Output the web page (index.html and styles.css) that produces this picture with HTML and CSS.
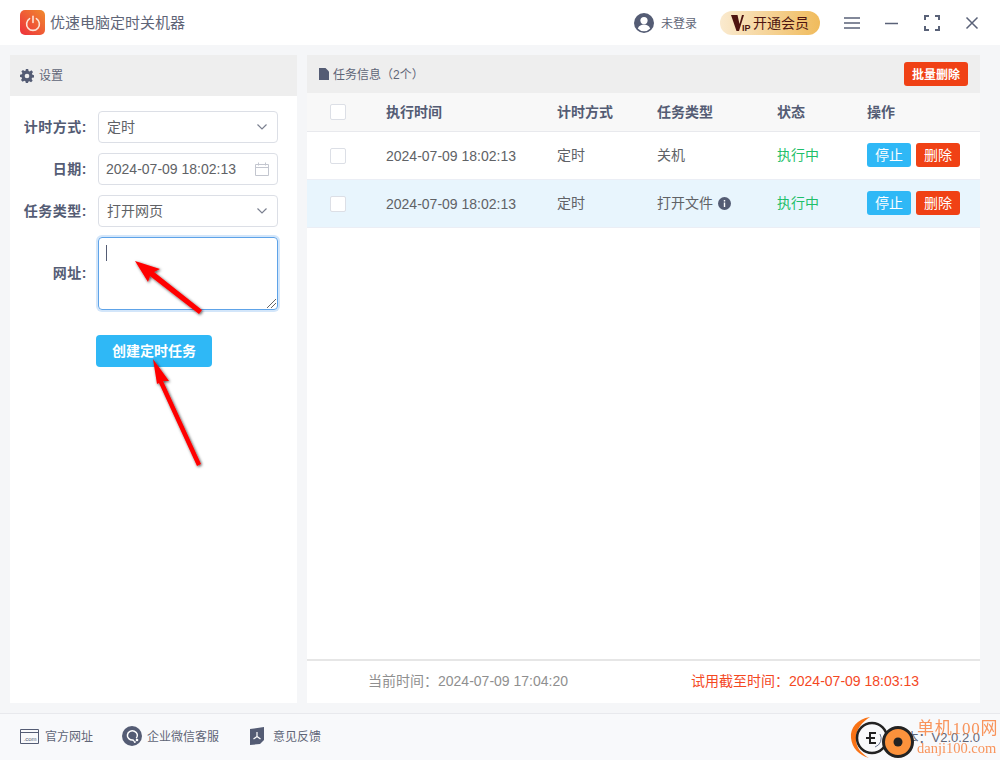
FILE: index.html
```html
<!DOCTYPE html>
<html lang="zh-CN">
<head>
    <meta charset="UTF-8">
    <title>优速电脑定时关机器</title>
    <link rel="stylesheet" href="styles.css">
</head>
<body>
<div class="app">
    <!-- 标题栏 -->
    <header class="titlebar">
        <div class="logo">
            <svg width="18" height="18" viewBox="0 0 18 18" fill="none" stroke="#fde3d6" stroke-width="1.6" stroke-linecap="round"><path d="M5.6 4.6a6.4 6.4 0 1 0 6.8 0"/><path d="M9 2.4v6"/></svg>
        </div>
        <span class="app-name">优速电脑定时关机器</span>
        <div class="user">
            <svg width="20" height="20" viewBox="0 0 20 20"><circle cx="10" cy="10" r="10" fill="#545c74"/><circle cx="10" cy="7.6" r="3.6" fill="#fff"/><path d="M3.8 15.4c1.2-3 3.6-4 6.2-4s5 1 6.2 4a8.4 8.4 0 0 1-12.4 0z" fill="#fff"/></svg>
            <span>未登录</span>
        </div>
        <div class="vip">
            <svg width="22" height="18" viewBox="0 0 22 18"><path d="M0 1h6.500l2 9 2.500-9h2L8 17H5.500z" fill="#4e1410"/><text x="11" y="17" font-size="9" font-weight="700" fill="#4e1410" font-family="Liberation Sans, sans-serif">IP</text></svg>
            <span>开通会员</span>
        </div>
        <div class="win-btns">
            <svg width="16" height="12" viewBox="0 0 16 12" stroke="#5a6278" stroke-width="1.5"><path d="M0 1h16M0 6h16M0 11h16"/></svg>
            <svg width="14" height="12" viewBox="0 0 14 12" stroke="#5a6278" stroke-width="1.5"><path d="M0 6.500h13"/></svg>
            <svg width="16" height="16" viewBox="0 0 16 16" fill="none" stroke="#5a6278" stroke-width="2"><path d="M1 5V1h4M11 1h4v4M15 11v4h-4M5 15H1v-4"/></svg>
            <svg width="14" height="14" viewBox="0 0 14 14" stroke="#5a6278" stroke-width="1.5"><path d="M1.500 1.500l11 11M12.500 1.500l-11 11"/></svg>
        </div>
    </header>

    <main class="content">
        <!-- 左侧设置 -->
        <section class="settings">
            <div class="settings-head">
                <svg width="14" height="14" viewBox="0 0 24 24"><path fill="#545c74" fill-rule="evenodd" d="M10 0h4l.7 3.300 2 .8L19.500 2.300l2.800 2.800-1.800 2.800.8 2L24 10.700v3.800l-3.300.7-.8 2 1.800 2.800-2.800 2.800-2.800-1.800-2 .8L13.800 24H10l-.7-3.200-2-.8-2.800 1.800-2.800-2.800 1.800-2.800-.8-2L0 13.500v-3.800l3.300-.7.8-2-1.800-2.800L5 1.500l2.800 1.800 2-.8zM12 8a4 4 0 1 0 0 8 4 4 0 0 0 0-8z"/></svg>
                <span class="lift">设置</span>
            </div>
            <div class="form">
                <label>计时方式:</label>
                <div class="field"><span class="val lift">定时</span><svg class="chev" width="10" height="6" viewBox="0 0 10 6" fill="none" stroke="#7b8090" stroke-width="1.200"><path d="M.5.500 5 5 9.500.5"/></svg></div>
                <label>日期:</label>
                <div class="field field-date"><span class="val">2024-07-09 18:02:13</span><svg width="14" height="14" viewBox="0 0 14 14" fill="none" stroke="#c3c6cf"><path d="M.5 2.500h13v11H.5zM.5 5.500h13M3.500.5v3M10.500.5v3"/></svg></div>
                <label>任务类型:</label>
                <div class="field"><span class="val lift">打开网页</span><svg class="chev" width="10" height="6" viewBox="0 0 10 6" fill="none" stroke="#7b8090" stroke-width="1.200"><path d="M.5.500 5 5 9.500.5"/></svg></div>
                <label class="label-area">网址:</label>
                <div class="area">
                    <i class="caret"></i>
                    <svg class="grip" width="9" height="9" viewBox="0 0 9 9" stroke="#666"><path d="M0 9l9-9M4 9l5-5"/></svg>
                </div>
            </div>
            <button class="btn-create">创建定时任务</button>
        </section>

        <!-- 右侧任务列表 -->
        <section class="tasks">
            <div class="tasks-head">
                <div class="tasks-title">
                    <svg width="10" height="12" viewBox="0 0 10 12"><path fill="#545c74" d="M0 0h6.500L10 3.500V12H0z"/></svg>
                    <span class="lift">任务信息（2个）</span>
                </div>
                <button class="btn-batch">批量删除</button>
            </div>
            <div class="row row-head">
                <div class="col-check"><i class="check"></i></div>
                <div class="col-time lift">执行时间</div>
                <div class="col-mode lift">计时方式</div>
                <div class="col-type lift">任务类型</div>
                <div class="col-state lift">状态</div>
                <div class="col-ops lift">操作</div>
            </div>
            <div class="row">
                <div class="col-check"><i class="check"></i></div>
                <div class="col-time">2024-07-09 18:02:13</div>
                <div class="col-mode lift2">定时</div>
                <div class="col-type lift2">关机</div>
                <div class="col-state running lift2">执行中</div>
                <div class="col-ops col-btns"><button class="btn-stop">停止</button><button class="btn-del">删除</button></div>
            </div>
            <div class="row row-active">
                <div class="col-check"><i class="check"></i></div>
                <div class="col-time">2024-07-09 18:02:13</div>
                <div class="col-mode lift2">定时</div>
                <div class="col-type"><span class="lift2">打开文件</span>
                    <svg class="info" width="13" height="13" viewBox="0 0 13 13"><circle cx="6.500" cy="6.500" r="6.500" fill="#545c74"/><path d="M5.800 5.500h1.400v4.500H5.800zM5.800 3h1.400v1.400H5.800z" fill="#fff"/></svg>
                </div>
                <div class="col-state running lift2">执行中</div>
                <div class="col-ops col-btns"><button class="btn-stop">停止</button><button class="btn-del">删除</button></div>
            </div>
            <div class="tasks-foot">
                <span class="now lift">当前时间：2024-07-09 17:04:20</span>
                <span class="trial lift">试用截至时间：2024-07-09 18:03:13</span>
            </div>
        </section>
    </main>

    <!-- 底部 -->
    <footer class="bottom">
        <div class="link">
            <svg width="19" height="15" viewBox="0 0 19 15" fill="none" stroke="#545c74"><path d="M.5.500h18v14H.5zM.5 3.500h18"/><text x="3.500" y="11.500" font-size="6" fill="#545c74" stroke="none" font-family="Liberation Sans, sans-serif">.com</text></svg>
            <span class="lift">官方网址</span>
        </div>
        <div class="link link-wx">
            <svg width="20" height="20" viewBox="0 0 20 20"><circle cx="10" cy="10" r="10" fill="#545c74"/><path d="M14.300 12.300A5 4.600 0 1 0 11 14l1 1.200" fill="none" stroke="#fff" stroke-width="1.500"/><circle cx="15" cy="14" r="1.300" fill="#fff"/><circle cx="12.800" cy="16" r="1" fill="#fff"/></svg>
            <span class="lift">企业微信客服</span>
        </div>
        <div class="link link-fb">
            <svg width="15" height="18" viewBox="0 0 15 18"><path fill="#545c74" d="M0 2l14-2v13l-4 4-10 1z"/><path d="M7 5v5M3.500 12 7 9.500l3.500 2.500" fill="none" stroke="#fff" stroke-width="1.200"/></svg>
            <span class="lift">意见反馈</span>
        </div>
        <span class="version">版本：V2.0.2.0</span>
    </footer>

    <!-- 红色箭头标注 -->
    <svg class="marks" width="1000" height="760" viewBox="0 0 1000 760">
        <defs>
            <filter id="shade" x="-30%" y="-30%" width="160%" height="160%"><feDropShadow dx="1" dy="1" stdDeviation="1.500" flood-color="#000" flood-opacity=".7"/></filter>
        </defs>
        <g fill="#f00" filter="url(#shade)">
            <path d="M135 261l25 8-6 3 48 38-3 4-49-38-2 6z"/>
            <path d="M153 359l16 22-6 0 38 83-4 2-38-83-2 1z"/>
        </g>
    </svg>

    <!-- 水印 -->
    <div class="watermark">
        <svg width="70" height="44" viewBox="0 0 70 44">
            <path d="M20 1C7 3 0 12 1 22c1 10 8 17 18 20-7-4-13-10-13-19C6 13 12 6 20 1z" fill="#f97316"/>
            <circle cx="22" cy="22" r="15" fill="none" stroke="#222" stroke-width="2.500"/>
            <path d="M26 17h-6v10h6M16 22h9" fill="none" stroke="#222" stroke-width="2"/>
            <path d="M30 18a9 9 0 0 1-5 13" fill="none" stroke="#6b7690" stroke-width="1"/>
            <circle cx="48" cy="26" r="14.500" fill="#fb923c" stroke="#222" stroke-width="3"/>
            <circle cx="48" cy="26" r="4.500" fill="#222"/>
        </svg>
        <div class="wm-text">
            <b>单机100网</b>
            <span>danji100.com</span>
        </div>
    </div>
</div>
</body>
</html>
```

FILE: styles.css
```css
* {
    box-sizing: border-box;
}

html, body {
    margin: 0;
    padding: 0;
}

body {
    font-family: "Liberation Sans", "Noto Sans CJK SC", sans-serif;
    font-size: 14px;
    color: #606266;
}

button {
    font-family: inherit;
    border: none;
    color: #fff;
    padding: 0 0 2px;
}

/* 中文字体基线偏低，往上提一点 */
.lift {
    position: relative;
    top: -1px;
}

.lift2 {
    position: relative;
    top: -2px;
}

.app {
    position: relative;
    width: 1000px;
    height: 760px;
    overflow: hidden;
    display: flex;
    flex-direction: column;
    background-color: #f5f6f8;
}

/* 标题栏 */
.titlebar {
    height: 45px;
    flex: none;
    display: flex;
    align-items: center;
    background-color: #fff;
    padding: 0 20px;
}

.logo {
    width: 25px;
    height: 25px;
    border-radius: 5px;
    background: linear-gradient(45deg, #ee2f3c, #f08a2e);
    display: flex;
    align-items: center;
    justify-content: center;
}

.app-name {
    margin-left: 5px;
    font-size: 15px;
    color: #5f6577;
    padding-bottom: 3px;
}

.user {
    margin-left: auto;
    display: flex;
    align-items: center;
    gap: 7px;
    font-size: 12px;
    color: #5f6577;
}

.vip {
    margin-left: 23px;
    width: 100px;
    height: 24px;
    border-radius: 12px;
    background: linear-gradient(90deg, #faeacf, #f0bb5c);
    display: flex;
    align-items: center;
    padding-left: 11px;
    font-size: 14px;
    color: #4e1410;
}

.vip span {
    padding-bottom: 2px;
}

.win-btns {
    margin-left: 24px;
    margin-right: 1px;
    display: flex;
    align-items: center;
    gap: 25px;
}

/* 主体 */
.content {
    flex: none;
    height: 658px;
    padding: 10px 20px 0 10px;
    display: flex;
    gap: 10px;
}

.settings {
    width: 287px;
    background-color: #fff;
}

.settings-head {
    height: 41px;
    background-color: #eee;
    display: flex;
    align-items: center;
    padding-left: 10px;
    gap: 5px;
    font-size: 12px;
    color: #5f6577;
}

.form {
    display: grid;
    grid-template-columns: 77px 180px;
    column-gap: 11px;
    row-gap: 10px;
    padding-top: 15px;
}

.form label {
    text-align: right;
    font-weight: 700;
    color: #545c74;
    line-height: 32px;
    letter-spacing: .5px;
}

.form .label-area {
    line-height: 72px;
}

.field {
    height: 32px;
    border: 1px solid #dcdfe6;
    border-radius: 4px;
    display: flex;
    align-items: center;
    justify-content: space-between;
    padding: 0 10px 0 8px;
    color: #606266;
}

.field-date {
    padding-left: 7px;
    padding-right: 8px;
}

.area {
    position: relative;
    height: 73px;
    border: 1px solid #5ea3e8;
    border-radius: 4px;
    box-shadow: 0 0 0 2px #d3e6fa;
}

.caret {
    position: absolute;
    left: 7px;
    top: 7px;
    width: 1px;
    height: 16px;
    background-color: #545c74;
}

.grip {
    position: absolute;
    right: 1px;
    bottom: 1px;
}

.btn-create {
    display: block;
    margin: 25px 0 0 86px;
    width: 116px;
    height: 32px;
    border-radius: 4px;
    background-color: #2fb8f6;
    font-size: 14px;
    font-weight: 700;
}

/* 任务列表 */
.tasks {
    flex: 1;
    background-color: #fff;
    display: flex;
    flex-direction: column;
}

.tasks-head {
    height: 38px;
    flex: none;
    background-color: #eee;
    display: flex;
    align-items: center;
    justify-content: space-between;
    padding: 0 12px;
}

.tasks-title {
    display: flex;
    align-items: center;
    gap: 4px;
    font-size: 12px;
    color: #5f6577;
}

.btn-batch {
    width: 64px;
    height: 24px;
    border-radius: 3px;
    background-color: #f04115;
    font-size: 12px;
    font-weight: 700;
}

.row {
    height: 48px;
    flex: none;
    display: flex;
    align-items: center;
    border-bottom: 1px solid #ebeef5;
}

.row-head {
    height: 39px;
    background-color: #f8f8f8;
    font-weight: 700;
    color: #545c74;
    border-bottom: 1px solid #e8e9ed;
}

.row-active {
    background-color: #e8f5fd;
}

.col-check {
    width: 79px;
    padding-left: 23px;
    display: flex;
}

.check {
    width: 16px;
    height: 16px;
    background-color: #fff;
    border: 1px solid #dcdfe6;
    border-radius: 2px;
}

.col-time {
    width: 171px;
}

.col-mode {
    width: 100px;
}

.col-type {
    width: 120px;
    display: flex;
    align-items: center;
    gap: 5px;
}

.col-state {
    width: 90px;
}

.running {
    color: #1fbf6a;
}

.col-ops {
    display: flex;
    gap: 5px;
}

.col-btns {
    padding-bottom: 2px;
}

.btn-stop, .btn-del {
    width: 44px;
    height: 24px;
    border-radius: 3px;
    font-size: 14px;
}

.btn-stop {
    background-color: #2fb8f6;
}

.btn-del {
    background-color: #f04115;
}

.tasks-foot {
    margin-top: auto;
    height: 44px;
    flex: none;
    border-top: 2px solid #e6e6e6;
    display: flex;
    align-items: center;
    justify-content: space-between;
    padding: 0 61px 2px;
}

.now {
    color: #8f8f8f;
}

.trial {
    color: #f4481f;
}

/* 底部 */
.bottom {
    position: relative;
    margin-top: 10px;
    flex: 1;
    border-top: 1px solid #e8e9ed;
    background-color: #f8f9fb;
    display: flex;
    align-items: center;
    padding-left: 20px;
    padding-bottom: 2px;
    font-size: 12px;
    color: #5f6577;
}

.link {
    display: flex;
    align-items: center;
    gap: 6px;
}

.link-wx {
    margin-left: 29px;
    gap: 5px;
}

.link-fb {
    margin-left: 31px;
    gap: 8px;
}

.version {
    margin-left: auto;
    margin-right: 20px;
    font-size: 13px;
}

/* 标注和水印 */
.marks {
    position: absolute;
    left: 0;
    top: 0;
    pointer-events: none;
}

.watermark {
    position: absolute;
    left: 850px;
    top: 716px;
    display: flex;
}

.wm-text {
    margin-left: -3px;
    font-family: "Liberation Serif", "Noto Sans CJK SC", serif;
    color: #f98a4b;
    display: flex;
    flex-direction: column;
    white-space: nowrap;
    opacity: .9;
}

.wm-text b {
    font-weight: 400;
    font-size: 17px;
    line-height: 26px;
    letter-spacing: .8px;
}

.wm-text span {
    font-size: 14.500px;
    line-height: 15px;
    margin-top: -1px;
}
```
